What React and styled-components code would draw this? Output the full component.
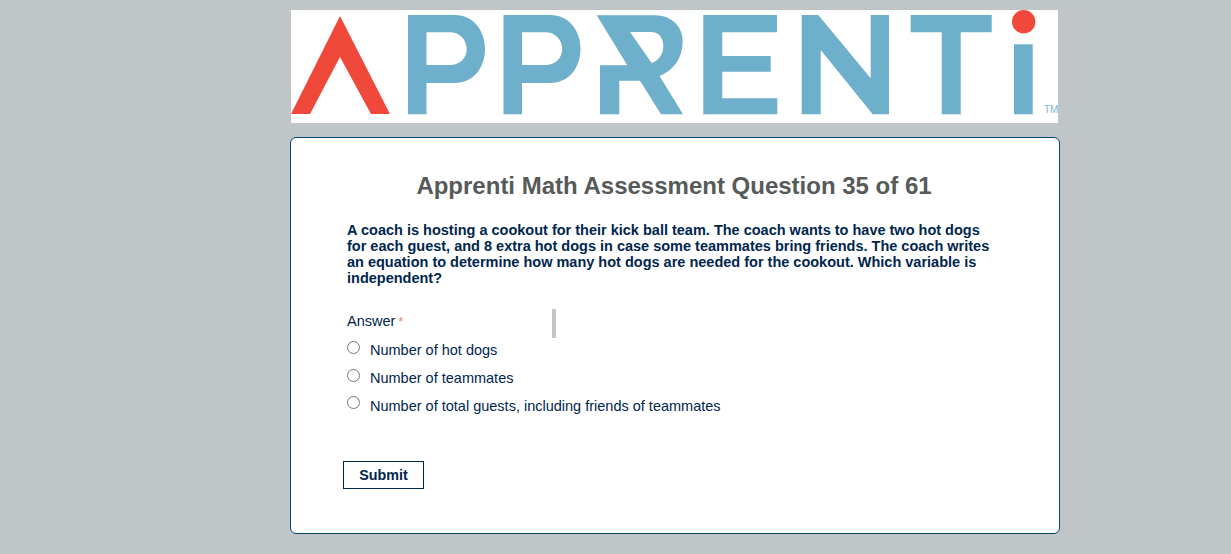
import React from "react";
import styled, { createGlobalStyle } from "styled-components";

const GlobalStyle = createGlobalStyle`
  html, body {
    margin: 0;
    padding: 0;
    background: #c0c5c7;
    font-family: "Liberation Sans", Arial, sans-serif;
  }
`;

const Page = styled.div`
  width: 770px;
  margin-left: 290px;
  padding-top: 10px;
  height: 544px;
  overflow: hidden;
`;

const Banner = styled.div`
  width: 767px;
  height: 113px;
  margin-left: 1px;
  background: #fff;
  overflow: hidden;
`;

const LogoSvg = styled.svg`
  display: block;
`;

const Card = styled.div`
  box-sizing: border-box;
  width: 770px;
  height: 397px;
  margin-top: 14px;
  padding: 34px 56px 0;
  background: #fff;
  border: 1px solid #00446f;
  border-radius: 6px;
`;

const Title = styled.h1`
  margin: 0 0 22px -2px;
  font-size: 24px;
  line-height: 28px;
  font-weight: bold;
  text-align: center;
  color: #565a58;
`;

const Question = styled.p`
  margin: 0 0 23px;
  width: 650px;
  font-size: 14.5px;
  line-height: 16px;
  font-weight: bold;
  color: #00264d;
`;

const AnswerRow = styled.div`
  display: flex;
  align-items: flex-start;
  height: 29px;
  font-size: 14.5px;
  line-height: 24px;
  color: #00264d;
`;

const Label = styled.span`
  width: 205px;
`;

const Required = styled.span`
  margin-left: 3px;
  font-size: 13px;
  color: #f08a70;
`;

const Divider = styled.span`
  width: 4px;
  height: 29px;
  background: #c6c6c6;
`;

const Options = styled.div`
  display: flex;
  flex-direction: column;
`;

const Option = styled.label`
  display: flex;
  align-items: flex-start;
  height: 28px;
  font-size: 14.5px;
  line-height: 16px;
  color: #00264d;
`;

const Radio = styled.input.attrs({ type: "radio", name: "answer" })`
  width: 13px;
  height: 13px;
  margin: ${(props) => props.$top}px 10px 0 0;
`;

const OptionText = styled.span`
  padding-top: 4px;
`;

const SubmitButton = styled.button`
  display: block;
  box-sizing: border-box;
  width: 81px;
  height: 28px;
  margin: 39px 0 0 -4px;
  padding: 0;
  background: #fff;
  border: 1px solid #00264d;
  border-radius: 0;
  font-family: inherit;
  font-size: 14.3px;
  font-weight: bold;
  color: #00264d;
`;

const LETTER_P =
  "M117 5 H164 C182 5 194 20 194 39 C194 58 182 73 164 73 H135.5 V104.3 H117 Z M135.5 22.3 V55 H159 C169 55 175.7 48 175.7 39 C175.7 30 169 22.3 159 22.3 Z";

function ApprentiLogo() {
  return (
    <LogoSvg width="767" height="113" viewBox="0 0 767 113">
      <g style={{ filter: "blur(0.4px)" }}>
        <path d="M49 6 L99 104 L80 104 L49 47 L19 104 L0 104 Z" fill="#f0493b" />
        <g fill="#6eafcb">
          <path fillRule="evenodd" d={LETTER_P} />
          <path fillRule="evenodd" d={LETTER_P} transform="translate(95.5 0)" />
          <path
            fillRule="evenodd"
            d="M305.7 5.3 H364 C381 5.3 391.7 17 391.7 31 C391.7 48 383 60 368.5 66 L392 104.3 H370 L349 70.7 H328.3 V104.3 H309 V55.3 H336.3 Z M339 22 L360.7 53 C367 51 372.3 45 372.3 36.3 C372.3 28 368 22 360 22 Z"
          />
          <path d="M412.3 5 H486 V22.3 H431.3 V46 H479.7 V61.7 H431.3 V88.3 H486.3 V104.3 H412.3 Z" />
          <path d="M510.7 5 H527.3 L579.7 68.3 V5 H598 V104.3 H581.7 L529.7 40 V104.3 H510.7 Z" />
          <path d="M619.7 5 H700.7 V22.3 H669.7 V104.3 H650.7 V22.3 H619.7 Z" />
          <rect x="723" y="34.3" width="18.7" height="70" />
        </g>
        <circle cx="732.7" cy="11.7" r="11.7" fill="#f0493b" />
      </g>
      <text x="753" y="103.3" fontSize="10" fill="#7fb9d4" fontFamily="Liberation Sans, sans-serif">
        TM
      </text>
    </LogoSvg>
  );
}

export default function App() {
  return (
    <Page>
      <GlobalStyle />
      <Banner>
        <ApprentiLogo />
      </Banner>
      <Card>
        <Title>Apprenti Math Assessment Question 35 of 61</Title>
        <Question>
          A coach is hosting a cookout for their kick ball team. The coach wants
          to have two hot dogs for each guest, and 8 extra hot dogs in case some
          teammates bring friends. The coach writes an equation to determine how
          many hot dogs are needed for the cookout. Which variable is
          independent?
        </Question>
        <AnswerRow>
          <Label>
            Answer<Required>*</Required>
          </Label>
          <Divider />
        </AnswerRow>
        <Options>
          <Option>
            <Radio $top={3} />
            <OptionText>Number of hot dogs</OptionText>
          </Option>
          <Option>
            <Radio $top={3} />
            <OptionText>Number of teammates</OptionText>
          </Option>
          <Option>
            <Radio $top={2} />
            <OptionText>Number of total guests, including friends of teammates</OptionText>
          </Option>
        </Options>
        <SubmitButton>Submit</SubmitButton>
      </Card>
    </Page>
  );
}
